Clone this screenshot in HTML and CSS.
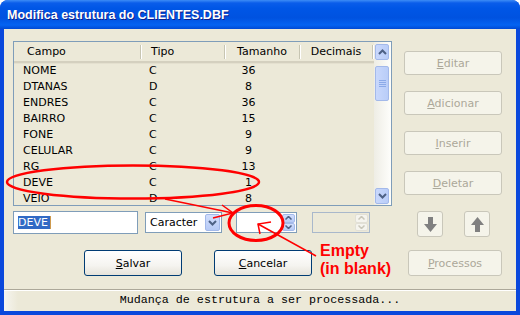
FILE: index.html
```html
<!DOCTYPE html>
<html lang="pt">
<head>
    <meta charset="UTF-8">
    <title>Modifica estrutura do CLIENTES.DBF</title>
    <link rel="stylesheet" href="styles.css">
</head>
<body>
    <div class="window">
        <div class="titlebar">Modifica estrutura do CLIENTES.DBF</div>
        <div class="client">
            <div class="main">
                <div class="left">
                    <div class="grid">
                        <div class="grid-body">
                            <div class="grid-head">
                                <div class="hcell h-campo">Campo</div>
                                <div class="hcell h-tipo">Tipo</div>
                                <div class="hcell h-tam">Tamanho</div>
                                <div class="hcell h-dec">Decimais</div>
                            </div>
                            <div class="grid-row"><span class="c-campo">NOME</span><span class="c-tipo">C</span><span class="c-tam">36</span><span></span></div>
                            <div class="grid-row"><span class="c-campo">DTANAS</span><span class="c-tipo">D</span><span class="c-tam">8</span><span></span></div>
                            <div class="grid-row"><span class="c-campo">ENDRES</span><span class="c-tipo">C</span><span class="c-tam">36</span><span></span></div>
                            <div class="grid-row"><span class="c-campo">BAIRRO</span><span class="c-tipo">C</span><span class="c-tam">15</span><span></span></div>
                            <div class="grid-row"><span class="c-campo">FONE</span><span class="c-tipo">C</span><span class="c-tam">9</span><span></span></div>
                            <div class="grid-row"><span class="c-campo">CELULAR</span><span class="c-tipo">C</span><span class="c-tam">9</span><span></span></div>
                            <div class="grid-row"><span class="c-campo">RG</span><span class="c-tipo">C</span><span class="c-tam">13</span><span></span></div>
                            <div class="grid-row"><span class="c-campo">DEVE</span><span class="c-tipo">C</span><span class="c-tam">1</span><span></span></div>
                            <div class="grid-row"><span class="c-campo">VEIO</span><span class="c-tipo">D</span><span class="c-tam">8</span><span></span></div>
                        </div>
                        <div class="scrollbar">
                            <div class="sb-btn">
                                <svg width="9" height="6" viewBox="0 0 9 6"><path d="M1 5 L4.5 1.5 L8 5" fill="none" stroke="#4D6185" stroke-width="2"/></svg>
                            </div>
                            <div class="sb-thumb">
                                <svg width="7" height="8" viewBox="0 0 7 8"><path d="M0 0.5H7M0 2.5H7M0 4.5H7M0 6.5H7" stroke="#8CAAE8" stroke-width="1"/></svg>
                            </div>
                            <div class="sb-track"></div>
                            <div class="sb-btn">
                                <svg width="9" height="6" viewBox="0 0 9 6"><path d="M1 1 L4.5 4.5 L8 1" fill="none" stroke="#4D6185" stroke-width="2"/></svg>
                            </div>
                        </div>
                    </div>

                    <div class="editor">
                        <div class="name-field"><span class="selected">DEVE</span><span class="caret"></span></div>
                        <div class="combo">
                            <span class="combo-text">Caracter</span>
                            <span class="combo-btn">
                                <svg width="9" height="6" viewBox="0 0 9 6"><path d="M1 1 L4.5 4.5 L8 1" fill="none" stroke="#4D6185" stroke-width="2"/></svg>
                            </span>
                        </div>
                        <div class="spin">
                            <div class="spin-btns">
                                <span class="spin-half"><svg width="7" height="4" viewBox="0 0 7 4"><path d="M0.5 3.5 L3.5 0.5 L6.5 3.5" fill="none" stroke="#4D6185" stroke-width="1.5"/></svg></span>
                                <span class="spin-half"><svg width="7" height="4" viewBox="0 0 7 4"><path d="M0.5 0.5 L3.5 3.5 L6.5 0.5" fill="none" stroke="#4D6185" stroke-width="1.5"/></svg></span>
                            </div>
                        </div>
                        <div class="spin spin-off">
                            <div class="spin-btns">
                                <span class="spin-half"><svg width="7" height="4" viewBox="0 0 7 4"><path d="M0.5 3.5 L3.5 0.5 L6.5 3.5" fill="none" stroke="#C9C7BA" stroke-width="1.5"/></svg></span>
                                <span class="spin-half"><svg width="7" height="4" viewBox="0 0 7 4"><path d="M0.5 0.5 L3.5 3.5 L6.5 0.5" fill="none" stroke="#C9C7BA" stroke-width="1.5"/></svg></span>
                            </div>
                        </div>
                    </div>

                    <div class="actions">
                        <div class="btn btn-main"><span><u>S</u>alvar</span></div>
                        <div class="btn btn-main"><span><u>C</u>ancelar</span></div>
                    </div>
                </div>

                <div class="side">
                    <div class="btn btn-off btn-side"><span><u>E</u>ditar</span></div>
                    <div class="btn btn-off btn-side"><span><u>A</u>dicionar</span></div>
                    <div class="btn btn-off btn-side"><span><u>I</u>nserir</span></div>
                    <div class="btn btn-off btn-side"><span><u>D</u>eletar</span></div>
                    <div class="move-row">
                        <div class="btn btn-off btn-move">
                            <svg width="13" height="15" viewBox="0 0 13 15"><path d="M4 0H9V7H13L6.5 15L0 7H4Z" fill="#808080"/></svg>
                        </div>
                        <div class="btn btn-off btn-move">
                            <svg width="13" height="15" viewBox="0 0 13 15"><path d="M4 15H9V8H13L6.5 0L0 8H4Z" fill="#808080"/></svg>
                        </div>
                    </div>
                    <div class="btn btn-off btn-proc"><span><u>P</u>rocessos</span></div>
                </div>
            </div>
            <div class="statusbar">Mudança de estrutura a ser processada...</div>
        </div>

        <!-- anotações em vermelho por cima do diálogo -->
        <svg class="marks" width="520" height="315" viewBox="0 0 520 315">
            <ellipse cx="133" cy="182" rx="126" ry="16.5" fill="none" stroke="#FF0000" stroke-width="2.5"/>
            <path d="M165 199 L233 213" fill="none" stroke="#FF0000" stroke-width="1.5"/>
            <path d="M222 205 L233 213 L213 218" fill="none" stroke="#FF0000" stroke-width="1.5"/>
            <ellipse cx="256" cy="223" rx="27" ry="17.5" fill="none" stroke="#FF0000" stroke-width="3"/>
            <path d="M316 256 L258 224" fill="none" stroke="#FF0000" stroke-width="1.5"/>
            <path d="M271 222 L258 224 L260 234" fill="none" stroke="#FF0000" stroke-width="1.5"/>
        </svg>
        <div class="note">Empty<br>(in blank)</div>
    </div>
</body>
</html>
```

FILE: styles.css
```css
* {
    margin: 0;
    padding: 0;
    box-sizing: border-box;
}

body {
    background: #fff;
    font-family: "DejaVu Sans", sans-serif;
    font-size: 11px;
    color: #000;
}

.window {
    position: relative;
    width: 520px;
    height: 315px;
    display: flex;
    flex-direction: column;
    background: #0A48DC;
    border-radius: 8px 8px 0 0;
    overflow: hidden;
}

.titlebar {
    height: 29px;
    padding: 8px 0 0 7px;
    color: #fff;
    font-family: "Liberation Sans", sans-serif;
    font-weight: bold;
    font-size: 12.5px;
    text-shadow: 1px 1px 0 #0F1F8A;
    background: linear-gradient(to bottom,
        #3D8CF6 0,
        #0A5DEA 3px,
        #0056E6 8px,
        #0052E0 18px,
        #0463F2 25px,
        #0049D4 29px);
}

.client {
    flex: 1;
    margin: 0 4px 4px;
    background: #ECE9D8;
    display: flex;
    flex-direction: column;
}

.main {
    flex: 1;
    display: flex;
    padding: 12px 0 0 9px;
}

.left {
    width: 379px;
}

/* grade de campos */

.grid {
    display: flex;
    height: 165px;
    border: 1px solid #7F9DB9;
}

.grid-body {
    flex: 1;
    overflow: hidden;
}

.grid-head,
.grid-row {
    display: grid;
    grid-template-columns: 127px 84px 75px 73px;
}

.grid-head {
    height: 21px;
    border-bottom: 2px solid #D4D0BF;
    box-shadow: 0 1px 0 #E4E0CF;
}

.hcell {
    height: 14px;
    margin-top: 3px;
    line-height: 14px;
    border-right: 1px solid #C7C5B2;
    box-shadow: 1px 0 0 #fff;
    white-space: nowrap;
}

.h-campo { padding-left: 13px; }
.h-tipo { padding-left: 10px; }
.h-tam,
.h-dec { text-align: center; }

.grid-row {
    height: 16px;
    line-height: 16px;
}

.c-campo { padding-left: 9px; }
.c-tipo { padding-left: 8px; }
.c-tam {
    text-align: center;
    padding-right: 28px;
}

.scrollbar {
    width: 17px;
    display: flex;
    flex-direction: column;
    background: linear-gradient(to right, #EEEDE5, #FEFEFB);
}

.sb-btn,
.sb-thumb {
    margin: 2px 2px 0 1px;
    height: 16px;
    border: 1px solid #A3B9EA;
    border-radius: 2px;
    background: linear-gradient(to right, #C9D8FC, #B9CDF8);
    display: flex;
    align-items: center;
    justify-content: center;
}

.sb-thumb {
    height: 35px;
    margin-top: 6px;
}

.sb-track {
    flex: 1;
}

.sb-btn:last-child {
    margin: 0 2px 1px 1px;
}

/* linha de edição */

.editor {
    display: flex;
    align-items: center;
    height: 23px;
    margin-top: 5px;
}

.name-field {
    width: 125px;
    height: 23px;
    border: 1px solid #7F9DB9;
    background: #fff;
    padding: 4px 0 0 4px;
    display: flex;
    align-items: flex-start;
}

.selected {
    display: inline-block;
    height: 13px;
    line-height: 13px;
    background: #316AC5;
    color: #fff;
    padding-right: 2px;
}

.caret {
    display: inline-block;
    width: 1px;
    height: 13px;
    background: #CE9A4E;
}

.combo {
    width: 77px;
    height: 21px;
    margin-left: 7px;
    border: 1px solid #7F9DB9;
    background: #fff;
    display: flex;
    align-items: center;
}

.combo-text {
    flex: 1;
    padding-left: 4px;
}

.combo-btn,
.spin-half {
    border: 1px solid #A3B9EA;
    border-radius: 2px;
    background: linear-gradient(to bottom, #D2DEFC, #B6CAF6);
    display: flex;
    align-items: center;
    justify-content: center;
}

.combo-btn {
    width: 15px;
    height: 17px;
    margin-right: 1px;
}

.spin {
    width: 61px;
    height: 21px;
    margin-left: 14px;
    border: 1px solid #7F9DB9;
    background: #fff;
    display: flex;
    justify-content: flex-end;
    padding: 1px;
}

.spin-btns {
    width: 13px;
    display: flex;
    flex-direction: column;
}

.spin-half {
    flex: 1;
}

.spin-off {
    width: 58px;
    margin-left: 15px;
    background: #ECE9D8;
    border-color: #A9B8CB;
}

.spin-off .spin-half {
    border-color: #E2E0D6;
    background: #F5F4EE;
}

/* botões */

.btn {
    display: flex;
    align-items: center;
    justify-content: center;
    border-radius: 3px;
}

.btn-main {
    width: 98px;
    height: 26px;
    border: 1px solid #003C74;
    background: linear-gradient(to bottom, #FFFFFF 0, #F5F4F0 60%, #E6E3DA 100%);
}

.btn-off {
    border: 1px solid #C9C7BA;
    background: #F5F4EA;
    color: #ACA899;
}

.actions {
    display: flex;
    gap: 32px;
    margin-top: 16px;
    padding-left: 71px;
}

.side {
    width: 98px;
    margin-left: 12px;
    padding-top: 10px;
    display: flex;
    flex-direction: column;
    gap: 16px;
}

.btn-side {
    height: 24px;
}

.move-row {
    display: flex;
    gap: 21px;
    padding-left: 13px;
}

.btn-move {
    width: 26px;
    height: 26px;
}

.btn-proc {
    width: 94px;
    height: 26px;
    margin: -3px 0 0 4px;
}

.statusbar {
    height: 22px;
    border-top: 1px solid #ACA899;
    box-shadow: inset 0 1px 0 #fff;
    background: linear-gradient(to right, #F6F5F0 0, #ECE9D8 14px);
    font-family: "Liberation Mono", monospace;
    font-size: 11.7px;
    line-height: 21px;
    text-align: center;
    white-space: nowrap;
}

/* anotações */

.marks {
    position: absolute;
    top: 0;
    left: 0;
    pointer-events: none;
}

.note {
    position: absolute;
    top: 242px;
    left: 320px;
    color: #FF0000;
    font-family: "Liberation Sans", sans-serif;
    font-weight: bold;
    font-size: 16px;
    line-height: 18px;
}
```
